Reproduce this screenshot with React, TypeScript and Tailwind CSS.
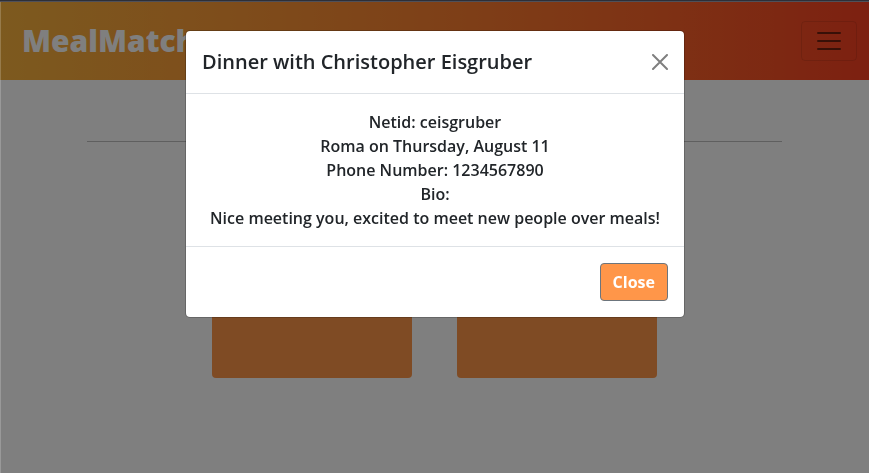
const details = [
  "Netid: ceisgruber",
  "Roma on Thursday, August 11",
  "Phone Number: 1234567890",
  "Bio:",
  "Nice meeting you, excited to meet new people over meals!",
];

function Navbar() {
  return (
    <header className="flex h-[78px] items-center justify-between bg-linear-to-r from-[#fab43e] to-[#fa4022] pl-[22px] pr-3">
      <a href="#" className="font-['Open_Sans',sans-serif] text-[30px] leading-[48px] font-extrabold text-white">
        MealMatch
      </a>
      <button
        type="button"
        aria-label="Toggle navigation"
        className="flex h-10 w-14 items-center justify-center rounded border border-black/10"
      >
        <svg viewBox="0 0 30 30" className="size-[30px]" fill="none" stroke="#000000" strokeOpacity="0.55" strokeWidth="2" strokeLinecap="round">
          <path d="M4 7h22M4 15h22M4 23h22" />
        </svg>
      </button>
    </header>
  );
}

function Modal() {
  return (
    <div className="fixed inset-0 border-l border-white/20 bg-black/50 px-2 pt-[30px]">
      <section
        role="dialog"
        aria-labelledby="modal-title"
        className="mx-auto max-w-[500px] rounded-[5px] border border-black/20 bg-white bg-clip-padding font-['Open_Sans',sans-serif] text-[#212529]"
      >
        <div className="flex items-center justify-between border-b border-[#dee2e6] p-4">
          <h5 id="modal-title" className="text-xl leading-[30px] font-semibold">
            Dinner with Christopher Eisgruber
          </h5>
          <button type="button" aria-label="Dismiss" className="text-black/50">
            <svg viewBox="0 0 16 16" className="size-4" fill="none" stroke="currentColor" strokeWidth="2" strokeLinecap="round">
              <path d="M1 1l14 14M15 1L1 15" />
            </svg>
          </button>
        </div>
        <div className="p-4 text-center text-base leading-6 font-semibold">
          {details.map((line) => (
            <p key={line}>{line}</p>
          ))}
        </div>
        <div className="flex justify-end border-t border-[#dee2e6] p-4">
          <button
            type="button"
            className="rounded border border-[#6c757d] bg-[#ff9649] px-3 py-1.5 text-base leading-6 font-bold text-white"
          >
            Close
          </button>
        </div>
      </section>
    </div>
  );
}

export default function App() {
  return (
    <div className="min-h-screen bg-white">
      <div className="relative z-10 h-0.5 border-b border-[#4f5059] bg-[#2d2f38]" />
      <Navbar />
      <main>
        <hr className="mx-auto mt-[61px] w-4/5 border-black/25" />
        <div className="mt-9 flex justify-center gap-[45px]">
          <div className="h-[200px] w-[200px] rounded bg-[#ff9649]" />
          <div className="h-[200px] w-[200px] rounded bg-[#ff9649]" />
        </div>
      </main>
      <Modal />
    </div>
  );
}
